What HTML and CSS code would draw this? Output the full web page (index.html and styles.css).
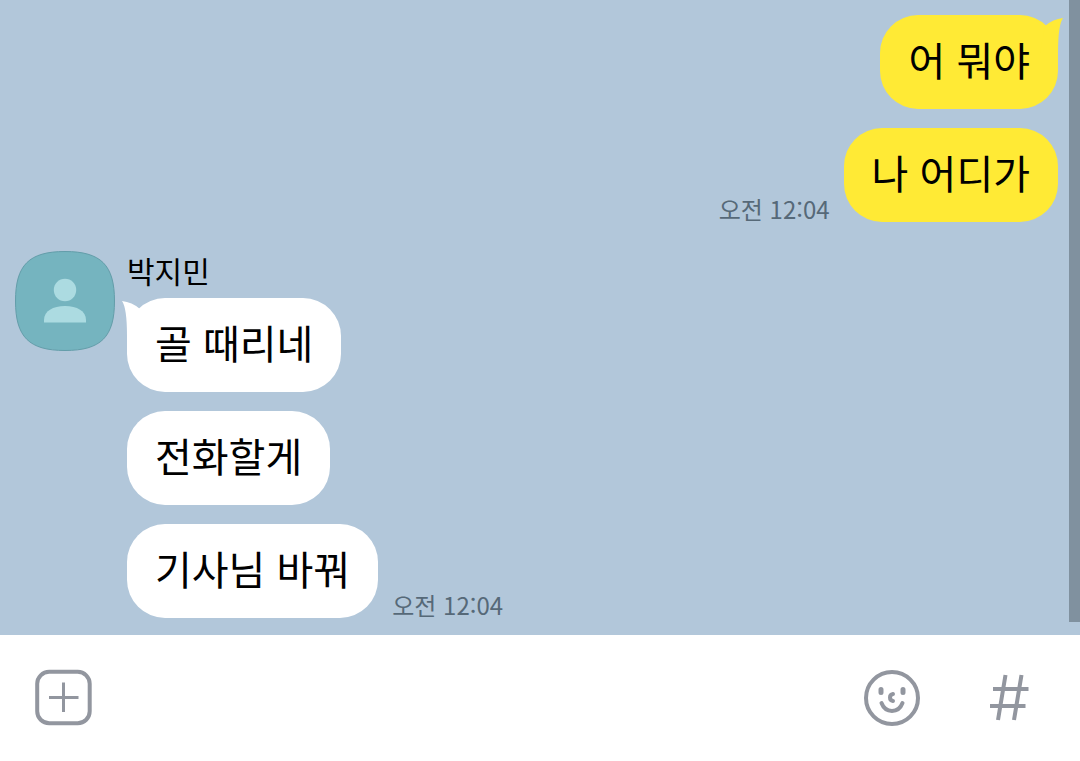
FILE: index.html
```html
<!DOCTYPE html>
<html lang="ko">
<head>
  <meta charset="UTF-8" />
  <meta name="viewport" content="width=device-width, initial-scale=1.0" />
  <title>박지민</title>
  <link rel="stylesheet" href="styles.css">
</head>
<body>

  <main class="chat">
    <!-- My messages -->
    <section class="sent">
      <div class="row">
        <p class="bubble">어 뭐야
          <svg class="tail" viewBox="0 0 28 40" aria-hidden="true"><path d="M9 11Q17 4 27 3Q22 10 22 38H4Z"/></svg>
        </p>
      </div>
      <div class="row">
        <time class="time">오전 12:04</time>
        <p class="bubble">나 어디가</p>
      </div>
    </section>

    <!-- Friend messages -->
    <section class="received">
      <svg class="avatar" viewBox="0 0 100 100" role="img" aria-label="프로필">
        <path class="avatar-bg" d="M50 .5C86 .5 99.5 14 99.5 50S86 99.5 50 99.5 .5 86 .5 50 14 .5 50 .5Z"/>
        <circle class="avatar-person" cx="50" cy="39" r="11.2"/>
        <path class="avatar-person" d="M29 71.5V69C29 60 38 55 50 55s21 5 21 14v2.5Z"/>
      </svg>
      <div class="messages">
        <h2 class="name">박지민</h2>
        <div class="list">
          <div class="row">
            <p class="bubble">골 때리네
              <svg class="tail" viewBox="0 0 28 40" aria-hidden="true"><path d="M9 11Q17 4 27 3Q22 10 22 38H4Z"/></svg>
            </p>
          </div>
          <div class="row">
            <p class="bubble">전화할게</p>
          </div>
          <div class="row">
            <p class="bubble">기사님 바꿔</p>
            <time class="time">오전 12:04</time>
          </div>
        </div>
      </div>
    </section>

    <div class="scrollbar"></div>
  </main>

  <form class="input-bar">
    <button type="button" aria-label="추가">
      <svg viewBox="0 0 60 60"><rect x="3.2" y="4.8" width="52.5" height="51.5" rx="12"/><path class="thin" d="M29.5 15.5V45M15 30.500H44.500"/></svg>
    </button>
    <input type="text" aria-label="메시지 입력">
    <button type="button" aria-label="이모티콘">
      <svg viewBox="0 0 60 60"><circle cx="30" cy="31" r="26"/><path class="eye" d="M19 22.5v3M41 22.5v3"/><path class="nose" d="M31 27Q28 27.500 28 30.500T31 34"/><path class="smile" d="M19.500 36C23.500 46.500 36.500 46.500 40.500 36"/></svg>
    </button>
    <button type="button" class="hash" aria-label="샵검색">
      <svg viewBox="0 0 60 60"><path d="M25.500 8 18 53M41.500 8 34 53M13 22H48.500M10 39H45.500"/></svg>
    </button>
  </form>

</body>
</html>
```

FILE: styles.css
```css
* {
  box-sizing: border-box;
}
body {
  font-family: "Noto Sans CJK KR", sans-serif;
  margin: 0;
  min-height: 100vh;
  display: flex;
  flex-direction: column;
  background: #fff;
  color: #000;
}
p, h2 {
  margin: 0;
}
.chat {
  position: relative;
  background: #b2c7da;
  padding: 15px 22px 17px 15px;
}
.sent,
.list {
  display: flex;
  flex-direction: column;
  gap: 19px;
}
.row {
  display: flex;
  align-items: flex-end;
  gap: 14px;
}
.sent .row {
  justify-content: flex-end;
}
.bubble {
  position: relative;
  padding: 14px 28px 20px;
  border-radius: 38px;
  background: #fff;
  font-size: 40px;
  line-height: 60px;
}
.sent .bubble {
  background: #ffea35;
}
.tail {
  position: absolute;
  top: 0;
  right: -6px;
  width: 28px;
  height: 40px;
  fill: #ffea35;
}
.received .tail {
  right: auto;
  left: -6px;
  transform: scaleX(-1);
  fill: #fff;
}
.time {
  font-size: 24px;
  line-height: 26px;
  color: #566978;
}
.received {
  display: flex;
  align-items: flex-start;
  gap: 12px;
  margin-top: 29px;
}
.avatar {
  flex: none;
  width: 100px;
  height: 100px;
}
.avatar-bg {
  fill: #75b4bf;
  stroke: #639da9;
}
.avatar-person {
  fill: #acdbe1;
}
.name {
  font-size: 30px;
  font-weight: 400;
  line-height: 38px;
  margin-bottom: 9px;
}
.scrollbar {
  position: absolute;
  top: 0;
  right: 0;
  bottom: 13px;
  width: 11px;
  background: #80919f;
}

/* Input bar */
.input-bar {
  display: flex;
  align-items: center;
  padding: 32px 40px 32px 34px;
}
.input-bar button {
  flex: none;
  width: 60px;
  height: 60px;
  padding: 0;
  border: none;
  background: none;
  cursor: pointer;
}
.input-bar .hash {
  margin-left: 58px;
}
.input-bar input {
  flex: 1;
  min-width: 0;
  height: 60px;
  margin: 0 16px;
  border: none;
  outline: none;
  background: none;
  font: inherit;
  font-size: 40px;
}
.input-bar svg {
  display: block;
  fill: none;
  stroke: #92969f;
  stroke-width: 4;
}
.input-bar .thin {
  stroke-width: 3;
}
.eye {
  stroke-width: 5;
  stroke-linecap: round;
}
.nose,
.smile {
  stroke-linecap: round;
}
```
